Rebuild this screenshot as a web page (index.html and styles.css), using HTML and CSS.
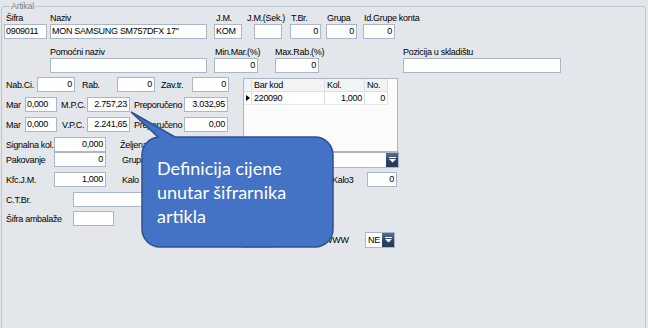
FILE: index.html
```html
<!DOCTYPE html>
<html>

<head>
    <meta charset="utf-8">
    <link rel="stylesheet" href="styles.css">
</head>

<body>

    <fieldset class="artikal">
        <legend>Artikal</legend>

        <!-- osnovni podaci -->
        <div class="labels">
            <span class="w44">Šifra</span>
            <span class="w166">Naziv</span>
            <span class="w31">J.M.</span>
            <span class="w44">J.M.(Sek.)</span>
            <span class="w36">T.Br.</span>
            <span class="w37">Grupa</span>
            <span>Id.Grupe konta</span>
        </div>
        <div class="row">
            <div class="inp w43">0909011</div>
            <div class="inp w157 ml3">MON SAMSUNG SM757DFX 17"</div>
            <div class="inp w28 ml7">KOM</div>
            <div class="inp w28 ml12"></div>
            <div class="inp num w31 ml8">0</div>
            <div class="inp num w31 ml5">0</div>
            <div class="inp num w32 ml6">0</div>
        </div>

        <div class="labels second">
            <span class="w165 ml44">Pomoćni naziv</span>
            <span class="w60">Min.Mar.(%)</span>
            <span class="w128">Max.Rab.(%)</span>
            <span>Pozicija u skladištu</span>
        </div>
        <div class="row">
            <div class="inp w157 ml46"></div>
            <div class="inp num w44 ml7">0</div>
            <div class="inp num w44 ml17">0</div>
            <div class="inp w158 ml84"></div>
        </div>

        <!-- cijene + bar kodovi -->
        <div class="middle">
            <div class="prices">
                <div class="row">
                    <span class="lbl w31">Nab.Ci.</span>
                    <div class="inp num w38">0</div>
                    <span class="lbl w35 ml5">Rab.</span>
                    <div class="inp num w38">0</div>
                    <span class="lbl w31 ml4">Zav.tr.</span>
                    <div class="inp num w37">0</div>
                </div>
                <div class="row">
                    <span class="lbl w19">Mar</span>
                    <div class="inp w32">0,000</div>
                    <span class="lbl w26 ml2">M.P.C.</span>
                    <div class="inp num w43">2.757,23</div>
                    <span class="lbl w50 ml2">Preporučeno</span>
                    <div class="inp num w44">3.032,95</div>
                </div>
                <div class="row">
                    <span class="lbl w19">Mar</span>
                    <div class="inp w32">0,000</div>
                    <span class="lbl w25 ml3">V.P.C.</span>
                    <div class="inp num w43">2.241,65</div>
                    <span class="lbl w50 ml2">Preporučeno</span>
                    <div class="inp num w44">0,00</div>
                </div>
                <div class="row">
                    <span class="lbl w48">Signalna kol.</span>
                    <div class="inp num w52">0,000</div>
                    <span class="lbl w42 ml12">Željena kol.</span>
                    <div class="inp num w65"></div>
                </div>
            </div>

            <div class="grid">
                <table>
                    <tr class="head">
                        <td class="ind"></td>
                        <td class="c-bar">Bar kod</td>
                        <td class="c-kol">Kol.</td>
                        <td class="c-no">No.</td>
                    </tr>
                    <tr>
                        <td class="ind"><span class="arrow"></span></td>
                        <td>220090</td>
                        <td class="num">1,000</td>
                        <td class="num">0</td>
                    </tr>
                </table>
            </div>
        </div>

        <div class="row">
            <span class="lbl w48">Pakovanje</span>
            <div class="inp num w52">0</div>
            <span class="lbl w35 ml14">Grupa</span>
            <div class="combo w242">
                <div class="combo-text"></div>
                <div class="combo-btn"><svg width="7" height="6" viewBox="0 0 7 6"><rect x="0" y="0" width="7" height="1" fill="#fff"/><path d="M0 2 H7 L3.5 5.5 Z" fill="#fff"/></svg></div>
            </div>
        </div>
        <div class="row">
            <span class="lbl w48">Kfc.J.M.</span>
            <div class="inp num w52">1,000</div>
            <span class="lbl w35 ml14">Kalo</span>
            <div class="inp num w60"></div>
            <span class="lbl w35 ml113">Kalo3</span>
            <div class="inp num w30">0</div>
        </div>
        <div class="row">
            <span class="lbl w67">C.T.Br.</span>
            <div class="inp w142"></div>
        </div>
        <div class="row r10">
            <span class="lbl w67">Šifra ambalaže</span>
            <div class="inp w41"></div>
        </div>
        <div class="row r11">
            <div class="combo w30 ml239">
                <div class="combo-text"></div>
                <div class="combo-btn"><svg width="7" height="6" viewBox="0 0 7 6"><rect x="0" y="0" width="7" height="1" fill="#fff"/><path d="M0 2 H7 L3.5 5.5 Z" fill="#fff"/></svg></div>
            </div>
            <span class="lbl w41 ml49">WWW</span>
            <div class="combo w30">
                <div class="combo-text">NE</div>
                <div class="combo-btn"><svg width="7" height="6" viewBox="0 0 7 6"><rect x="0" y="0" width="7" height="1" fill="#fff"/><path d="M0 2 H7 L3.5 5.5 Z" fill="#fff"/></svg></div>
            </div>
        </div>
    </fieldset>

    <!-- oblačić s objašnjenjem -->
    <svg class="callout" width="648" height="328" viewBox="0 0 648 328">
        <path d="M142 155 A18 18 0 0 1 158 137 L131 112 L175 137 L315 137 A18 18 0 0 1 333 155 L333 229 A18 18 0 0 1 315 247 L160 247 A18 18 0 0 1 142 229 Z" />
    </svg>
    <div class="callout-text">Definicija cijene<br>unutar šifrarnika<br>artikla</div>

</body>

</html>
```

FILE: styles.css
```css
body {
    margin: 0;
    width: 648px;
    height: 328px;
    overflow: hidden;
    position: relative;
    background: #e3e6ea;
    font-family: "Liberation Sans", Arial, sans-serif;
    font-size: 9px;
    letter-spacing: -0.3px;
    color: #000;
}

/* okvir "Artikal" */
.artikal {
    margin: 0 2px 0 1px;
    padding: 0 2px;
    height: 340px;
    box-sizing: border-box;
    border: 1px solid #bcc6d3;
    border-radius: 3px;
}

.artikal legend {
    margin-left: 6px;
    padding: 0 1px;
    line-height: 12px;
    color: #7d8591;
}

/* redovi */
.labels {
    display: flex;
    line-height: 12px;
    white-space: nowrap;
}

.labels span {
    padding-left: 2px;
    box-sizing: border-box;
}

.labels.second {
    margin-top: 7px;
}

.row {
    display: flex;
    align-items: center;
    height: 15px;
    white-space: nowrap;
}

.row + .row {
    margin-top: 5px;
}

.row.r10 {
    margin-top: 4px;
}

.row.r11 {
    margin-top: 6px;
}

.lbl {
    padding-left: 2px;
    line-height: 12px;
    flex-shrink: 0;
    overflow: hidden;
}

.inp {
    flex-shrink: 0;
    box-sizing: border-box;
    height: 15px;
    padding: 0 2px 0 1px;
    border: 1px solid #a9b7c9;
    background: #fff;
    line-height: 13px;
    overflow: hidden;
}

.num {
    text-align: right;
}

/* srednji dio: cijene lijevo, bar kodovi desno */
.middle {
    display: flex;
    margin-top: 4px;
}

.prices {
    width: 221px;
}

.grid {
    width: 155px;
    height: 74px;
    margin: 1px 0 0 18px;
    box-sizing: border-box;
    border: 1px solid #aab6c6;
    background: #fcfcfc;
}

.grid table {
    border-collapse: collapse;
    line-height: 11px;
}

.grid td {
    height: 12px;
    padding: 0 2px;
    border-right: 1px solid #dcdfe3;
    border-bottom: 1px solid #e6e8eb;
    background: #fff;
}

.grid .head td {
    height: 12px;
    background: #f2f3f4;
    border-bottom: 1px solid #dcdfe3;
}

.grid .ind {
    width: 4px;
    padding: 0 1px 0 2px;
}

.grid .c-bar {
    width: 68px;
}

.grid .c-kol {
    width: 35px;
}

.grid .c-no {
    width: 18px;
}

.arrow {
    display: block;
    width: 0;
    height: 0;
    border-top: 3px solid transparent;
    border-bottom: 3px solid transparent;
    border-left: 4px solid #000;
}

/* padajuće liste */
.combo {
    display: flex;
    flex-shrink: 0;
    height: 16px;
    box-sizing: border-box;
    border: 1px solid #a9b7c9;
    background: #fff;
}

.combo-text {
    flex: 1;
    padding-left: 2px;
    line-height: 14px;
}

.combo-btn {
    width: 12px;
    display: flex;
    align-items: center;
    justify-content: center;
    background: linear-gradient(#5a7193, #2b4268 55%, #233a5c);
}

/* širine i razmaci */
.w19 { width: 19px; }
.w25 { width: 25px; }
.w26 { width: 26px; }
.w28 { width: 28px; }
.w30 { width: 30px; }
.w31 { width: 31px; }
.w32 { width: 32px; }
.w35 { width: 35px; }
.w36 { width: 36px; }
.w37 { width: 37px; }
.w38 { width: 38px; }
.w41 { width: 41px; }
.w42 { width: 42px; }
.w43 { width: 43px; }
.w44 { width: 44px; }
.w48 { width: 48px; }
.w50 { width: 50px; }
.w52 { width: 52px; }
.w60 { width: 60px; }
.w65 { width: 65px; }
.w67 { width: 67px; }
.w128 { width: 128px; }
.w142 { width: 142px; }
.w157 { width: 157px; }
.w158 { width: 158px; }
.w165 { width: 165px; }
.w166 { width: 166px; }
.w242 { width: 242px; }

.ml2 { margin-left: 2px; }
.ml3 { margin-left: 3px; }
.ml4 { margin-left: 4px; }
.ml5 { margin-left: 5px; }
.ml6 { margin-left: 6px; }
.ml7 { margin-left: 7px; }
.ml8 { margin-left: 8px; }
.ml12 { margin-left: 12px; }
.ml14 { margin-left: 14px; }
.ml17 { margin-left: 17px; }
.ml44 { margin-left: 44px; }
.ml46 { margin-left: 46px; }
.ml49 { margin-left: 49px; }
.ml84 { margin-left: 84px; }
.ml113 { margin-left: 113px; }
.ml239 { margin-left: 239px; }

/* oblačić */
.callout {
    position: absolute;
    left: 0;
    top: 0;
}

.callout path {
    fill: #4472c4;
    stroke: #2f528f;
    stroke-width: 1.5;
}

.callout-text {
    position: absolute;
    left: 157px;
    top: 156px;
    font-family: Lato, "Open Sans", sans-serif;
    font-size: 18px;
    letter-spacing: 0;
    line-height: 24px;
    color: #fff;
}
```
